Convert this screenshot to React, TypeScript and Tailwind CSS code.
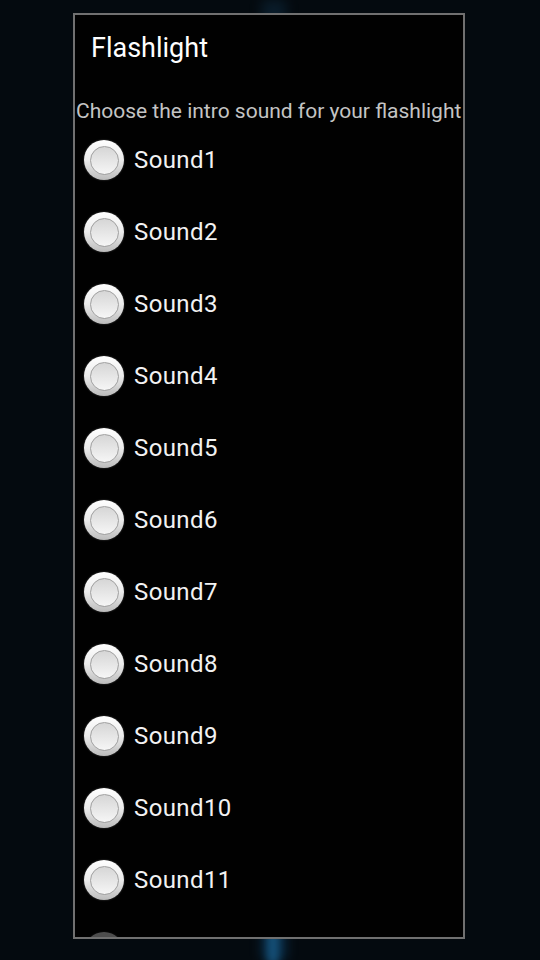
import React from "react";

function Radio() {
  return (
    <div className="w-[40px] h-[40px] rounded-full bg-gradient-to-b from-[#ffffff] via-[#ececec] to-[#bcbcbc] flex items-center justify-center shadow-[0_0_2px_rgba(255,255,255,0.3)] shrink-0">
      <div className="w-[29px] h-[29px] rounded-full border border-[#a0a0a0] bg-gradient-to-b from-[#d6d6d6] to-[#f6f6f6]" />
    </div>
  );
}

export default function App() {
  const sounds = Array.from({ length: 11 }, (_, i) => `Sound${i + 1}`);
  return (
    <div
      className="w-[540px] h-[960px] relative overflow-hidden bg-[#040a0f]"
      style={{ fontFamily: "Roboto, 'Noto Sans', sans-serif" }}
    >
      <div className="absolute left-[262px] top-0 w-[24px] h-[960px] bg-gradient-to-b from-[#0c2436] via-[#06121c] to-[#0d3a5c] blur-[6px] opacity-70" />
      <div className="absolute left-[268px] top-[925px] w-[10px] h-[40px] bg-[#16557f] blur-[4px]" />
      <div className="relative ml-[73px] pt-[13px]">
        <div className="w-[392px] h-[926px] border-2 border-[#707070] bg-[#010101] overflow-hidden">
          <div className="h-[67px] flex items-center pl-[16px] text-[27px] text-white">
            Flashlight
          </div>
          <div className="pt-[17px] pl-[1px] leading-[24px] h-[42px] text-[21px] text-[#c4c4c4] whitespace-nowrap">
            Choose the intro sound for your flashlight
          </div>
          {sounds.map((s) => (
            <div key={s} className="h-[72px] flex items-center pl-[9px] gap-[10px] shrink-0">
              <Radio />
              <span className="text-[24px] tracking-[0.4px] text-[#f2f2f2]">{s}</span>
            </div>
          ))}
          <div className="h-[72px] flex items-center pl-[9px] opacity-30">
            <Radio />
          </div>
        </div>
      </div>
    </div>
  );
}
